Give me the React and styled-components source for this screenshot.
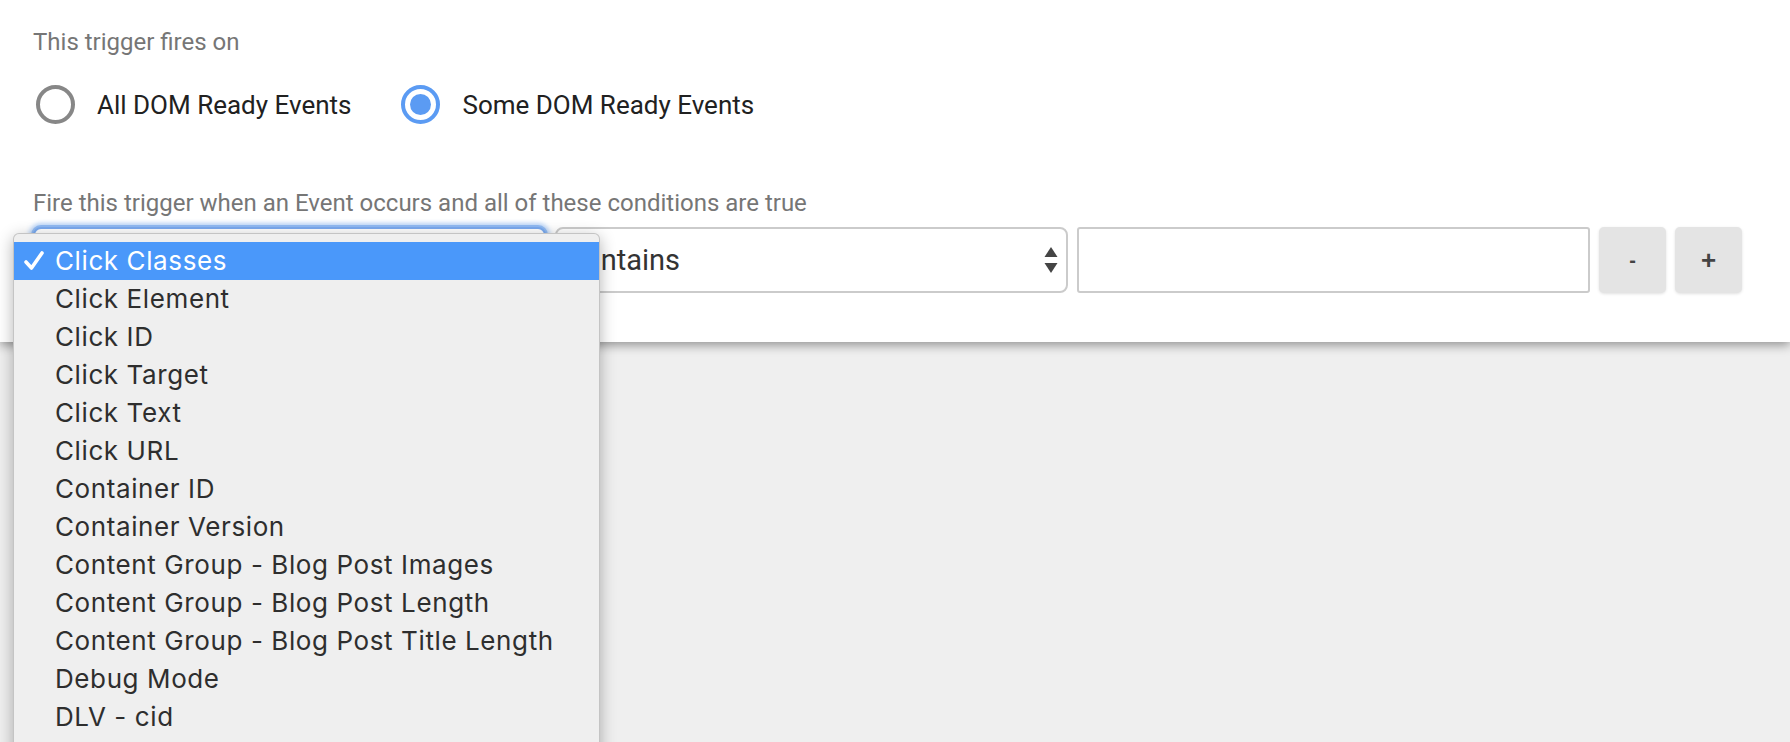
import React from "react";
import styled, { createGlobalStyle } from "styled-components";

const GlobalStyle = createGlobalStyle`
  html, body {
    margin: 0;
    padding: 0;
    height: 100%;
    overflow: hidden;
    background: #efefef;
  }
  #root {
    height: 100%;
  }
`;

const Page = styled.div`
  height: 100%;
  overflow: hidden;
  background: #efefef;
  font-family: Roboto, "Liberation Sans", sans-serif;
`;

const Panel = styled.div`
  position: relative;
  box-sizing: border-box;
  height: 342px;
  padding: 28px 33px 0;
  background: #fff;
  box-shadow: 0 3px 10px rgba(0, 0, 0, 0.4);
`;

const Caption = styled.div`
  font-size: 24px;
  line-height: 28px;
  color: #767676;
  margin-top: ${p => p.$top || 0}px;
`;

const RadioRow = styled.div`
  display: flex;
  align-items: center;
  height: 39px;
  margin-top: 29px;
  margin-left: 3px;
`;

const RadioOption = styled.label`
  display: flex;
  align-items: center;
  gap: 22px;
  margin-right: 50px;
  font-size: 26px;
  color: #212121;
  cursor: pointer;
`;

const RadioCircle = styled.span`
  box-sizing: border-box;
  width: 39px;
  height: 39px;
  border-radius: 50%;
  border: 4px solid ${p => (p.$checked ? "#5b9bf3" : "#878787")};
  display: flex;
  align-items: center;
  justify-content: center;
  &::after {
    content: "";
    display: ${p => (p.$checked ? "block" : "none")};
    width: 21px;
    height: 21px;
    border-radius: 50%;
    background: #5b9bf3;
  }
`;

const ConditionRow = styled.div`
  display: flex;
  gap: 9px;
  margin-top: 10px;
`;

const SelectWrap = styled.div`
  position: relative;
  width: 513px;
  height: 66px;
`;

const SelectBox = styled.div`
  box-sizing: border-box;
  width: 100%;
  height: 100%;
  display: flex;
  align-items: center;
  justify-content: space-between;
  padding: 0 8px 0 12px;
  border: 2px solid #cbcbcb;
  border-radius: 8px;
  background: #fff;
  font-size: 29px;
  color: #333;
  box-shadow: ${p => (p.$focused ? "0 0 0 2px #8fb9f2, 0 0 4px 4px rgba(100, 160, 240, 0.45)" : "none")};
  border-color: ${p => (p.$focused ? "#7aaaf0" : "#cbcbcb")};
`;

const TextInput = styled.div`
  box-sizing: border-box;
  width: 513px;
  height: 66px;
  border: 2px solid #cbcbcb;
  border-radius: 3px;
  background: #fff;
`;

const SmallButton = styled.button`
  width: 67px;
  height: 66px;
  border: none;
  border-radius: 5px;
  background: #e4e4e4;
  box-shadow: 0 1px 3px rgba(0, 0, 0, 0.12);
  color: #444;
  font-family: "Liberation Sans", Arial, sans-serif;
  font-weight: bold;
  font-size: ${p => (p.$big ? 26 : 20)}px;
  padding: 0;
  cursor: pointer;
`;

const Menu = styled.ul`
  position: absolute;
  left: -20px;
  top: 6px;
  z-index: 10;
  width: 587px;
  margin: 0;
  padding: 8px 0 60px;
  list-style: none;
  box-sizing: border-box;
  background: #efefef;
  border: 1px solid rgba(0, 0, 0, 0.18);
  border-radius: 6px;
  box-shadow: 0 4px 16px rgba(0, 0, 0, 0.3);
  font-family: Inter, "Noto Sans", sans-serif;
  font-size: 26px;
  letter-spacing: 0.6px;
`;

const MenuItem = styled.li`
  position: relative;
  height: 38px;
  line-height: 38px;
  padding-left: 41px;
  color: ${p => (p.$selected ? "#fff" : "#2e2e2e")};
  background: ${p => (p.$selected ? "#4a98fa" : "transparent")};
  white-space: nowrap;
`;

const Check = styled.svg`
  position: absolute;
  left: 10px;
  top: 9px;
`;

const Arrows = () => (
  <svg width="14" height="26" viewBox="0 0 14 26">
    <path d="M7 0 L13.5 10 L0.5 10 Z" fill="#444" />
    <path d="M7 26 L13.5 16 L0.5 16 Z" fill="#444" />
  </svg>
);

const items = [
  "Click Classes",
  "Click Element",
  "Click ID",
  "Click Target",
  "Click Text",
  "Click URL",
  "Container ID",
  "Container Version",
  "Content Group - Blog Post Images",
  "Content Group - Blog Post Length",
  "Content Group - Blog Post Title Length",
  "Debug Mode",
  "DLV - cid",
];

export default function App() {
  return (
    <Page>
      <GlobalStyle />
      <Panel>
        <Caption>This trigger fires on</Caption>
        <RadioRow>
          <RadioOption>
            <RadioCircle />
            All DOM Ready Events
          </RadioOption>
          <RadioOption>
            <RadioCircle $checked />
            Some DOM Ready Events
          </RadioOption>
        </RadioRow>
        <Caption $top={65}>Fire this trigger when an Event occurs and all of these conditions are true</Caption>
        <ConditionRow>
          <SelectWrap>
            <SelectBox $focused />
            <Menu>
              {items.map((label, i) => (
                <MenuItem key={label} $selected={i === 0}>
                  {i === 0 && (
                    <Check width="20" height="20" viewBox="0 0 20 20">
                      <path d="M2 11 L7.5 17 L18 2" fill="none" stroke="#fff" strokeWidth="3.6" strokeLinecap="round" strokeLinejoin="round" />
                    </Check>
                  )}
                  {label}
                </MenuItem>
              ))}
            </Menu>
          </SelectWrap>
          <SelectWrap>
            <SelectBox>
              contains
              <Arrows />
            </SelectBox>
          </SelectWrap>
          <TextInput />
          <SmallButton>-</SmallButton>
          <SmallButton $big>+</SmallButton>
        </ConditionRow>
      </Panel>
    </Page>
  );
}
